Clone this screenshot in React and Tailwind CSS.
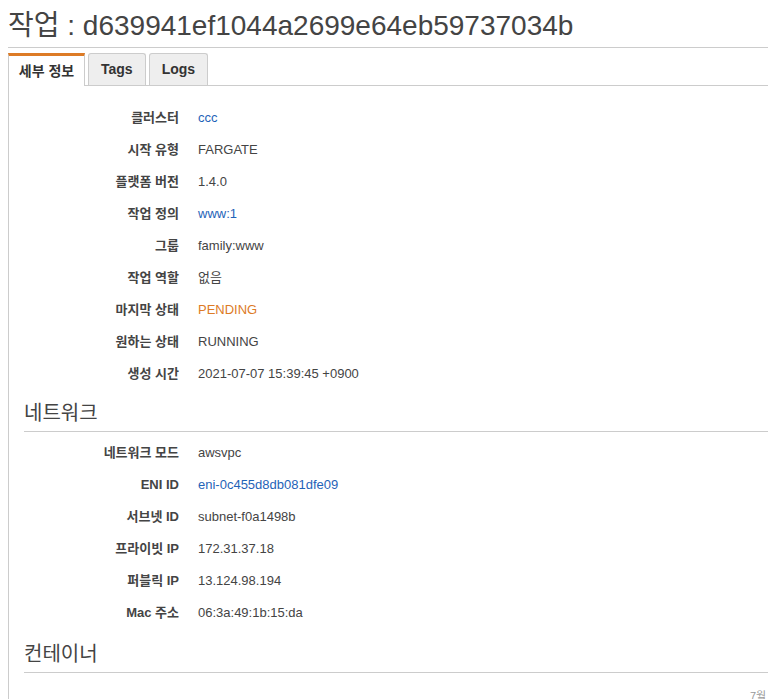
import React from "react";

const details = [
  { label: "클러스터", value: "ccc", kind: "link" },
  { label: "시작 유형", value: "FARGATE" },
  { label: "플랫폼 버전", value: "1.4.0" },
  { label: "작업 정의", value: "www:1", kind: "link" },
  { label: "그룹", value: "family:www" },
  { label: "작업 역할", value: "없음" },
  { label: "마지막 상태", value: "PENDING", kind: "warn" },
  { label: "원하는 상태", value: "RUNNING" },
  { label: "생성 시간", value: "2021-07-07 15:39:45 +0900" },
];

const network = [
  { label: "네트워크 모드", value: "awsvpc" },
  { label: "ENI ID", value: "eni-0c455d8db081dfe09", kind: "link" },
  { label: "서브넷 ID", value: "subnet-f0a1498b" },
  { label: "프라이빗 IP", value: "172.31.37.18" },
  { label: "퍼블릭 IP", value: "13.124.98.194" },
  { label: "Mac 주소", value: "06:3a:49:1b:15:da" },
];

const valueColor = {
  link: "text-[#1f63b8]",
  warn: "text-[#dd7b26]",
};

const Row = ({ label, value, kind }) => (
  <div className="flex items-center h-8 text-[13px]">
    <div className="w-[170px] text-right font-bold text-[#444]">{label}</div>
    <div className={`ml-[19px] ${valueColor[kind] || "text-[#444]"}`}>{value}</div>
  </div>
);

const SectionTitle = ({ children, className }) => (
  <h2
    className={`ml-[15px] text-[20px] leading-[28px] pb-[4px] text-[#444] border-b border-[#ccc] ${className}`}
  >
    {children}
  </h2>
);

export default function App() {
  return (
    <div className="bg-white min-h-screen overflow-hidden font-['Liberation_Sans','Noto_Sans_CJK_KR',sans-serif] text-[#444]">
      <h1 className="ml-2 pt-[10px] pb-[5px] text-[28px] leading-[32px] text-[#444] border-b border-[#ccc] whitespace-nowrap">
        작업 : d639941ef1044a2699e64eb59737034b
      </h1>

      <div className="ml-2 mt-[5px] flex items-end border-b border-[#ccc] text-[14px] font-bold text-[#333]">
        <div className="w-[77px] h-[33px] -mb-px flex items-center justify-center bg-white border-x border-[#ccc] border-t-[3px] border-t-[#dd7b26]">
          세부 정보
        </div>
        <div className="ml-[3px] h-[32px] px-3 flex items-center bg-[#eee] border border-b-0 border-[#ccc] rounded-t-[3px]">
          Tags
        </div>
        <div className="ml-[3px] h-[32px] px-3 flex items-center bg-[#eee] border border-b-0 border-[#ccc] rounded-t-[3px]">
          Logs
        </div>
      </div>

      <div className="ml-2 border-l border-[#ccc] pt-[16px] min-h-[620px]">
        {details.map((d) => (
          <Row key={d.label} {...d} />
        ))}

        <SectionTitle className="mt-[9px]">네트워크</SectionTitle>
        <div className="pt-[5px]">
          {network.map((d) => (
            <Row key={d.label} {...d} />
          ))}
        </div>

        <SectionTitle className="mt-[11px]">컨테이너</SectionTitle>
        <div className="pl-[741px] pt-[15px] text-[11px] text-[#999] whitespace-nowrap">
          7월 7일
        </div>
      </div>
    </div>
  );
}
